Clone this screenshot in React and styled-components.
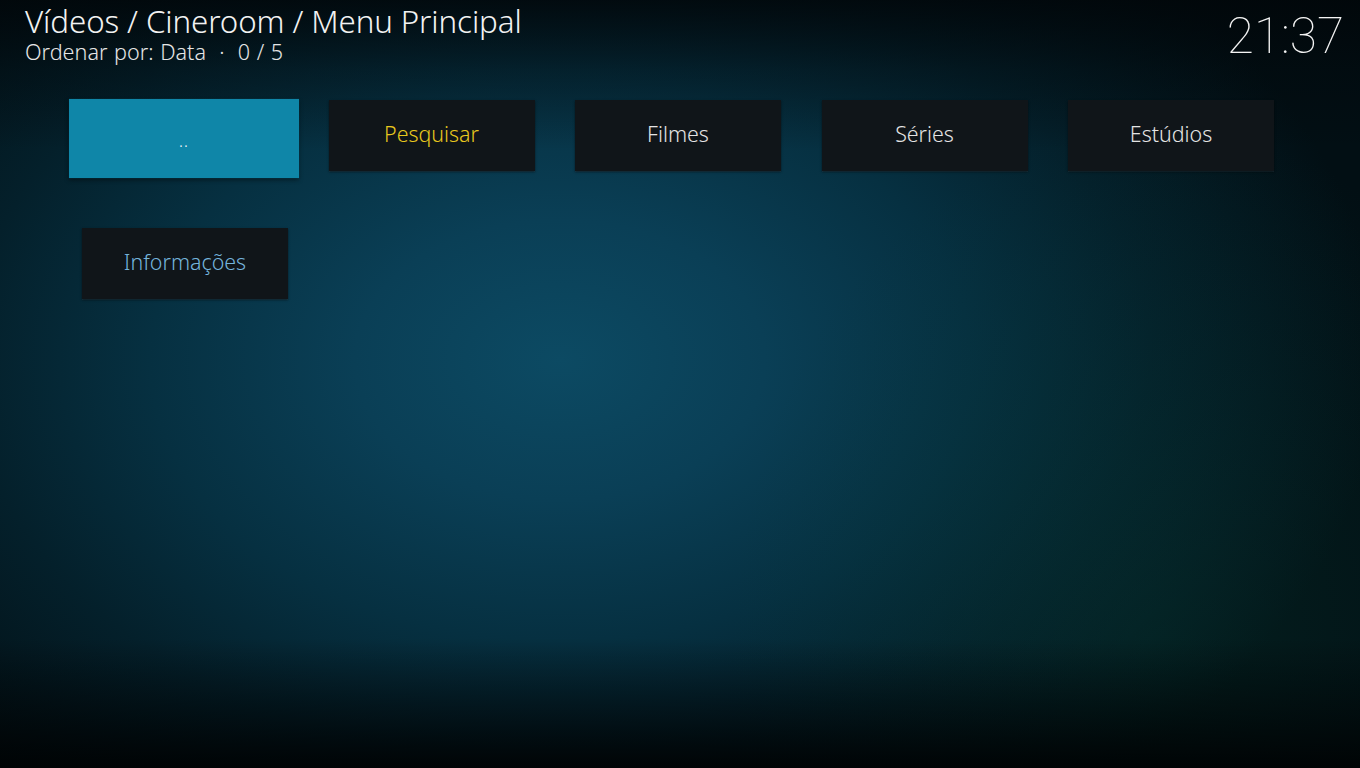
import React from "react";
import styled, { createGlobalStyle } from "styled-components";

const Global = createGlobalStyle`
  html, body { margin: 0; padding: 0; width: 100%; height: 100%; overflow: hidden; }
  body { background: #02090c; font-family: "Noto Sans", "Open Sans", sans-serif; }
  #root { width: 1360px; height: 768px; }
`;

const Screen = styled.div`
  position: relative;
  width: 1360px;
  height: 768px;
  overflow: hidden;
  background:
    linear-gradient(180deg, rgba(1,6,9,0.85) 0px, rgba(1,6,9,0.35) 70px, rgba(1,6,9,0) 150px),
    linear-gradient(0deg, rgba(0,3,4,0.95) 0px, rgba(0,3,4,0.55) 50px, rgba(0,3,4,0) 130px),
    radial-gradient(ellipse 420px 520px at 1150px 640px, rgba(6,60,50,0.35), rgba(6,60,50,0) 100%),
    radial-gradient(ellipse 820px 560px at 560px 360px, #0c4a63 0%, #0a3f56 25%, #063041 50%, #04202b 72%, #020f14 100%);
  display: flex;
  flex-direction: column;
`;

const Header = styled.header`
  display: flex;
  justify-content: space-between;
  align-items: flex-start;
  padding: 3px 16px 0 25px;
  height: 80px;
  box-sizing: border-box;
`;

const Breadcrumb = styled.div`
  display: flex;
  flex-direction: column;
  color: #f2f2f2;
`;

const Title = styled.div`
  font-size: 31.3px;
  font-weight: 350;
  line-height: 36px;
  letter-spacing: -0.1px;
`;

const Sub = styled.div`
  font-size: 21.6px;
  font-weight: 350;
  line-height: 22px;
  margin-top: 2px;
  color: #e6e6e6;
  word-spacing: 1px;
`;

const Clock = styled.div`
  font-family: Roboto, "Noto Sans", sans-serif;
  font-weight: 100;
  font-size: 49.5px;
  line-height: 66px;
  color: #f4f4f4;
`;

const Grid = styled.div`
  display: grid;
  grid-template-columns: repeat(5, 246.5px);
  grid-auto-rows: 128px;
  padding: 20px 0 0 82px;
`;

const Cell = styled.div`
  display: flex;
  align-items: flex-start;
`;

const Tile = styled.div`
  width: 206px;
  height: 71px;
  display: flex;
  align-items: center;
  justify-content: center;
  background: ${p => (p.$focused ? "#0f86a8" : "#101519")};
  color: ${p => p.$color || "#e4e4e4"};
  font-size: 21.4px;
  font-weight: 350;
  box-shadow: ${p =>
    p.$focused ? "0 2px 4px rgba(0,0,0,0.45)" : "0 1px 2px rgba(0,0,0,0.55), 0 1px 0 rgba(60,90,105,0.35)"};
  transform: ${p => (p.$focused ? "translate(-1px, 3px) scale(1.117, 1.115)" : "none")};
  padding-bottom: 4px;
  box-sizing: border-box;
`;

const Dots = styled.span`
  font-size: 14px;
  color: #ffffff;
  padding-top: 8px;
  letter-spacing: 1px;
`;

const items = [
  { label: "..", focused: true },
  { label: "Pesquisar", color: "#e8c81e" },
  { label: "Filmes" },
  { label: "Séries" },
  { label: "Estúdios" },
  { label: "Informações", color: "#74b4dc" },
];

export default function App() {
  return (
    <>
      <Global />
      <Screen>
        <Header>
          <Breadcrumb>
            <Title>Vídeos / Cineroom / Menu Principal</Title>
            <Sub>Ordenar por: Data&nbsp; · &nbsp;0 / 5</Sub>
          </Breadcrumb>
          <Clock>21:37</Clock>
        </Header>
        <Grid>
          {items.map(it => (
            <Cell key={it.label}>
              <Tile $focused={it.focused} $color={it.color}>
                {it.focused ? <Dots>..</Dots> : it.label}
              </Tile>
            </Cell>
          ))}
        </Grid>
      </Screen>
    </>
  );
}
